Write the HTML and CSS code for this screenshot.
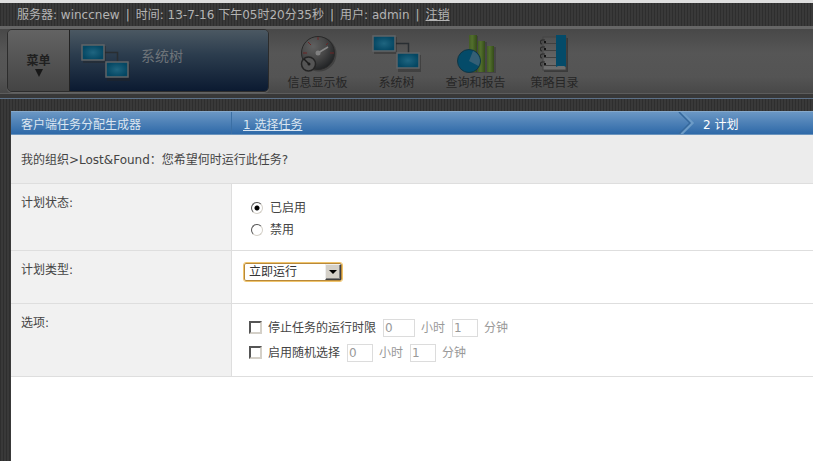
FILE: index.html
```html
<!DOCTYPE html>
<html lang="zh-CN">
<head>
    <meta charset="UTF-8">
    <meta name="viewport" content="width=device-width, initial-scale=1.0">
    <title>客户端任务分配生成器</title>
    <link rel="stylesheet" href="styles.css">
</head>
<body>
    <div class="status-bar">
        <span>服务器: winccnew</span>
        <span>|</span>
        <span>时间: 13-7-16 下午05时20分35秒</span>
        <span>|</span>
        <span>用户: admin</span>
        <span>|</span>
        <a href="#">注销</a>
    </div>

    <svg class="defs" width="0" height="0" aria-hidden="true">
        <defs>
            <radialGradient id="screen">
                <stop offset="0" stop-color="#1f6580"/>
                <stop offset="1" stop-color="#044763"/>
            </radialGradient>
            <radialGradient id="dial" cx="35%" cy="30%" r="75%">
                <stop offset="0" stop-color="#606060"/>
                <stop offset="0.5" stop-color="#484848"/>
                <stop offset="1" stop-color="#202224"/>
            </radialGradient>
            <linearGradient id="bar">
                <stop offset="0" stop-color="#445c26"/>
                <stop offset="0.4" stop-color="#526f2d"/>
                <stop offset="1" stop-color="#344b18"/>
            </linearGradient>
            <linearGradient id="paper" x1="0" y1="0" x2="0" y2="1">
                <stop offset="0" stop-color="#505050"/>
                <stop offset="1" stop-color="#707070"/>
            </linearGradient>
            <symbol id="tree" viewBox="0 0 50 38">
                <path d="M24 8.500H36.500V18" fill="none" stroke="#292e32" stroke-width="1.500"/>
                <rect x="2" y="2" width="23" height="17" fill="#222" opacity="0.4"/>
                <rect x="26" y="20" width="23" height="17" fill="#222" opacity="0.4"/>
                <rect x="1" y="1" width="22" height="15" fill="url(#screen)" stroke="#606467" stroke-width="1.500"/>
                <rect x="25" y="18" width="22" height="15" fill="url(#screen)" stroke="#606467" stroke-width="1.500"/>
            </symbol>
        </defs>
    </svg>

    <header class="toolbar">
        <div class="menu-box">
            <button class="menu-button" type="button">菜单<span class="arrow"></span></button>
            <a class="current" href="#">
                <svg width="50" height="38"><use href="#tree"/></svg>
                <span>系统树</span>
            </a>
        </div>
        <nav class="shortcuts">
            <a href="#">
                <svg width="38" height="38" viewBox="0 0 38 38">
                    <circle cx="20" cy="19" r="17.500" fill="#222" opacity="0.4"/>
                    <circle cx="19" cy="18" r="16.500" fill="url(#dial)" stroke="#292929"/>
                    <path d="M4 18H8M9 7L12 10M19 2V5M29 8L27 10M31 18H35" stroke="#6a2424" fill="none"/>
                    <path d="M19 18L29 12" stroke="#888" stroke-width="1.500"/>
                    <circle cx="19" cy="18" r="2.500" fill="#808080"/>
                    <circle cx="9.500" cy="29" r="7" fill="#555" stroke="#252525" stroke-width="1.500"/>
                    <path d="M5 24L10 29" stroke="#1c1c1c" stroke-width="1.500"/>
                    <circle cx="10" cy="29" r="1.500" fill="#1c1c1c"/>
                </svg>
                信息显示板
            </a>
            <a href="#">
                <svg width="50" height="38"><use href="#tree"/></svg>
                系统树
            </a>
            <a href="#">
                <svg width="40" height="38" viewBox="0 0 40 38">
                    <path d="M14 1H22V7H31V12H40V38H14Z" fill="#222" opacity="0.3"/>
                    <path d="M13 0H21V37H13Z" fill="url(#bar)"/>
                    <path d="M22 6H29V37H22Z" fill="url(#bar)"/>
                    <path d="M31 11H38V37H31Z" fill="url(#bar)"/>
                    <circle cx="13" cy="26" r="11.500" fill="#044b69" stroke="#123543"/>
                    <path d="M13 26L17 16A10.500 10.500 0 0 1 22.500 31Z" fill="#345f75"/>
                </svg>
                查询和报告
            </a>
            <a href="#">
                <svg width="30" height="38" viewBox="0 0 30 38">
                    <rect x="4" y="3" width="24" height="34" fill="#222" opacity="0.5"/>
                    <rect x="3" y="2" width="23" height="33" fill="url(#paper)" stroke="#444"/>
                    <path d="M4 8.500H26M4 15.500H26M4 22.500H26M4 30.500H26" stroke="#404040"/>
                    <path d="M16 0H26V32L24 31H18L16 32Z" fill="#044b69"/>
                    <g fill="none" stroke="#292929" stroke-width="1.200">
                        <path d="M5 5H2C0 5 0 9 2 9M5 12H2C0 12 0 16 2 16M5 19H2C0 19 0 23 2 23M5 27H2C0 27 0 31 2 31"/>
                    </g>
                    <path d="M4 6H6V8H4ZM4 13H6V15H4ZM4 20H6V22H4ZM4 28H6V30H4Z" fill="#151515"/>
                </svg>
                策略目录
            </a>
        </nav>
    </header>

    <main class="panel">
        <div class="steps">
            <h1>客户端任务分配生成器</h1>
            <div class="step"><a href="#">1 选择任务</a></div>
            <svg class="chevron" width="20" height="22" viewBox="0 0 20 22">
                <path d="M3 0L14 11L3 22" fill="none" stroke="#6c9bc7" stroke-width="3"/>
                <path d="M1 0L12 11L1 22" fill="none" stroke="#35689c" stroke-width="1.500"/>
            </svg>
            <div class="step-current">2 计划</div>
        </div>

        <p class="question">我的组织&gt;Lost&amp;Found：您希望何时运行此任务?</p>

        <form>
            <div class="form-row">
                <div class="row-label">计划状态:</div>
                <div class="row-content status">
                    <label class="radio-line"><input type="radio" name="status" checked>已启用</label>
                    <label class="radio-line"><input type="radio" name="status">禁用</label>
                </div>
            </div>
            <div class="form-row type-row">
                <label class="row-label" for="type">计划类型:</label>
                <div class="row-content">
                    <div class="select-wrap">
                        <select id="type">
                            <option>立即运行</option>
                        </select>
                        <span class="select-arrow"></span>
                    </div>
                </div>
            </div>
            <div class="form-row">
                <div class="row-label">选项:</div>
                <div class="row-content options">
                    <div class="option-line">
                        <input type="checkbox" id="stop">
                        <label for="stop">停止任务的运行时限</label>
                        <input class="wide" type="text" id="stop-hours" value="0" disabled>
                        <label class="unit" for="stop-hours">小时</label>
                        <input type="text" id="stop-minutes" value="1" disabled>
                        <label class="unit" for="stop-minutes">分钟</label>
                    </div>
                    <div class="option-line">
                        <input type="checkbox" id="random">
                        <label for="random">启用随机选择</label>
                        <input type="text" id="random-hours" value="0" disabled>
                        <label class="unit" for="random-hours">小时</label>
                        <input type="text" id="random-minutes" value="1" disabled>
                        <label class="unit" for="random-minutes">分钟</label>
                    </div>
                </div>
            </div>
        </form>
    </main>
</body>
</html>
```
FILE: styles.css
```css
* {
    box-sizing: border-box;
}

body {
    margin: 0;
    min-height: 100vh;
    display: flex;
    flex-direction: column;
    font-family: "DejaVu Sans", "Noto Sans CJK SC", sans-serif;
    font-size: 12px;
    line-height: 18px;
    color: #444;
    background: repeating-linear-gradient(90deg, #2e2e2e 0, #2e2e2e 1px, #393939 1px, #393939 3px);
}

input, select, button {
    font: inherit;
    margin: 0;
}

.defs {
    position: absolute;
}

.status-bar {
    display: flex;
    gap: 6px;
    height: 26px;
    padding: 3px 17px 0;
    border-top: 3px solid #dedede;
    color: #b4b4b4;
    white-space: nowrap;
}

.status-bar a {
    color: inherit;
}

/* toolbar */
.toolbar {
    display: flex;
    height: 73px;
    padding: 0 7px;
    border-top: 3px solid #666;
    border-bottom: 1px solid #5d7188;
    background: linear-gradient(#484848, #565656 24px, #545454 48px, #484848 64px, #5c5c5c 64px, #5c5c5c 65px, #383838 65px);
}

.menu-box {
    display: flex;
    width: 262px;
    height: 63px;
    border: 1px solid #2c2c2c;
    border-radius: 5px;
    overflow: hidden;
    box-shadow: 0 1px 1px #666;
}

.menu-button {
    width: 62px;
    padding: 8px 0 0;
    border: 0;
    border-right: 1px solid #222;
    background: linear-gradient(#636363, #444);
    color: #202020;
    font-weight: bold;
    line-height: 16px;
}

.arrow {
    display: block;
    width: 8px;
    margin: 0 auto;
    border: 4px solid transparent;
    border-top: 8px solid #181818;
    border-bottom: 0;
}

.current {
    flex: 1;
    display: flex;
    gap: 10px;
    padding: 14px 11px;
    background: linear-gradient(#4b5862, #2c3d4e 40%, #0b1a31);
    color: #6e7479;
    font-size: 14px;
    line-height: 24px;
    text-decoration: none;
}

.shortcuts {
    display: flex;
    padding: 6px 0 0 9px;
}

.shortcuts a {
    display: flex;
    flex-direction: column;
    align-items: center;
    width: 79px;
    color: #262626;
    line-height: 20px;
    text-decoration: none;
}

/* wizard panel */
.panel {
    flex: 1;
    margin: 12px 0 0 11px;
    background: #fff;
}

.steps {
    display: flex;
    height: 24px;
    border-top: 1px solid #86a9cb;
    border-bottom: 1px solid #6b94bd;
    background: linear-gradient(#6b97c4, #2e69a8);
    color: #dbe6f1;
    line-height: 26px;
}

.steps h1 {
    width: 221px;
    height: 22px;
    margin: 0;
    padding-left: 10px;
    border-right: 1px solid #3b6fa4;
    font-size: 12px;
    font-weight: normal;
}

.step {
    flex: 1;
    padding-left: 11px;
}

.step a {
    color: inherit;
}

.step-current {
    width: 115px;
    padding-left: 5px;
    color: #fff;
}

.question {
    margin: 0;
    padding: 16px 10px 14px;
    background: #ececec;
    border-bottom: 1px solid #dedede;
}

.form-row {
    display: grid;
    grid-template-columns: 221px 1fr;
    border-bottom: 1px solid #dedede;
}

.row-label {
    padding: 10px;
    border-right: 1px solid #dedede;
    background: #f1f1f1;
}

.row-content {
    padding: 12px;
}

.row-content.status {
    padding: 13px 12px 9px;
}

.row-content.options {
    padding: 11px 17px;
}

.radio-line {
    display: flex;
    align-items: center;
    gap: 7px;
    height: 22px;
    padding-left: 7px;
}

input[type="radio"] {
    appearance: none;
    width: 12px;
    height: 12px;
    border: 1px solid;
    border-color: #555 #d4d0c8 #d4d0c8 #555;
    border-radius: 50%;
}

input[type="radio"]:checked {
    background: radial-gradient(circle, #000 0 2px, #fff 3px);
}

input[type="checkbox"] {
    appearance: none;
    width: 13px;
    height: 13px;
    margin-right: 6px;
    border: 2px solid;
    border-color: #555 #d4d0c8 #d4d0c8 #555;
}

.type-row {
    min-height: 53px;
}

.select-wrap {
    display: flex;
    position: relative;
    width: 98px;
    height: 18px;
}

select {
    appearance: none;
    width: 100%;
    padding: 0 4px;
    border: 1px solid #b8893a;
    border-radius: 2px;
    outline: 1px solid #f0c46c;
    background: #fff;
    color: #333;
    line-height: 16px;
}

.select-arrow {
    position: absolute;
    top: 1px;
    right: 1px;
    width: 16px;
    height: 16px;
    border: 1px solid;
    border-color: #eee #404040 #404040 #eee;
    box-shadow: inset -1px -1px #808080;
    background: #d4d0c8;
    pointer-events: none;
}

.select-arrow::before {
    content: "";
    display: block;
    width: 0;
    margin: 5px 3px;
    border: 4px solid transparent;
    border-top-color: #000;
    border-bottom: 0;
}

.option-line {
    display: flex;
    align-items: center;
    height: 25px;
}

input[type="text"] {
    width: 26px;
    height: 18px;
    margin-left: 7px;
    padding: 0 1px;
    border: 1px solid #dcdcdc;
    background: #fff;
    color: #999;
}

input[type="text"].wide {
    width: 32px;
}

.unit {
    margin-left: 6px;
    color: #999;
}
```
